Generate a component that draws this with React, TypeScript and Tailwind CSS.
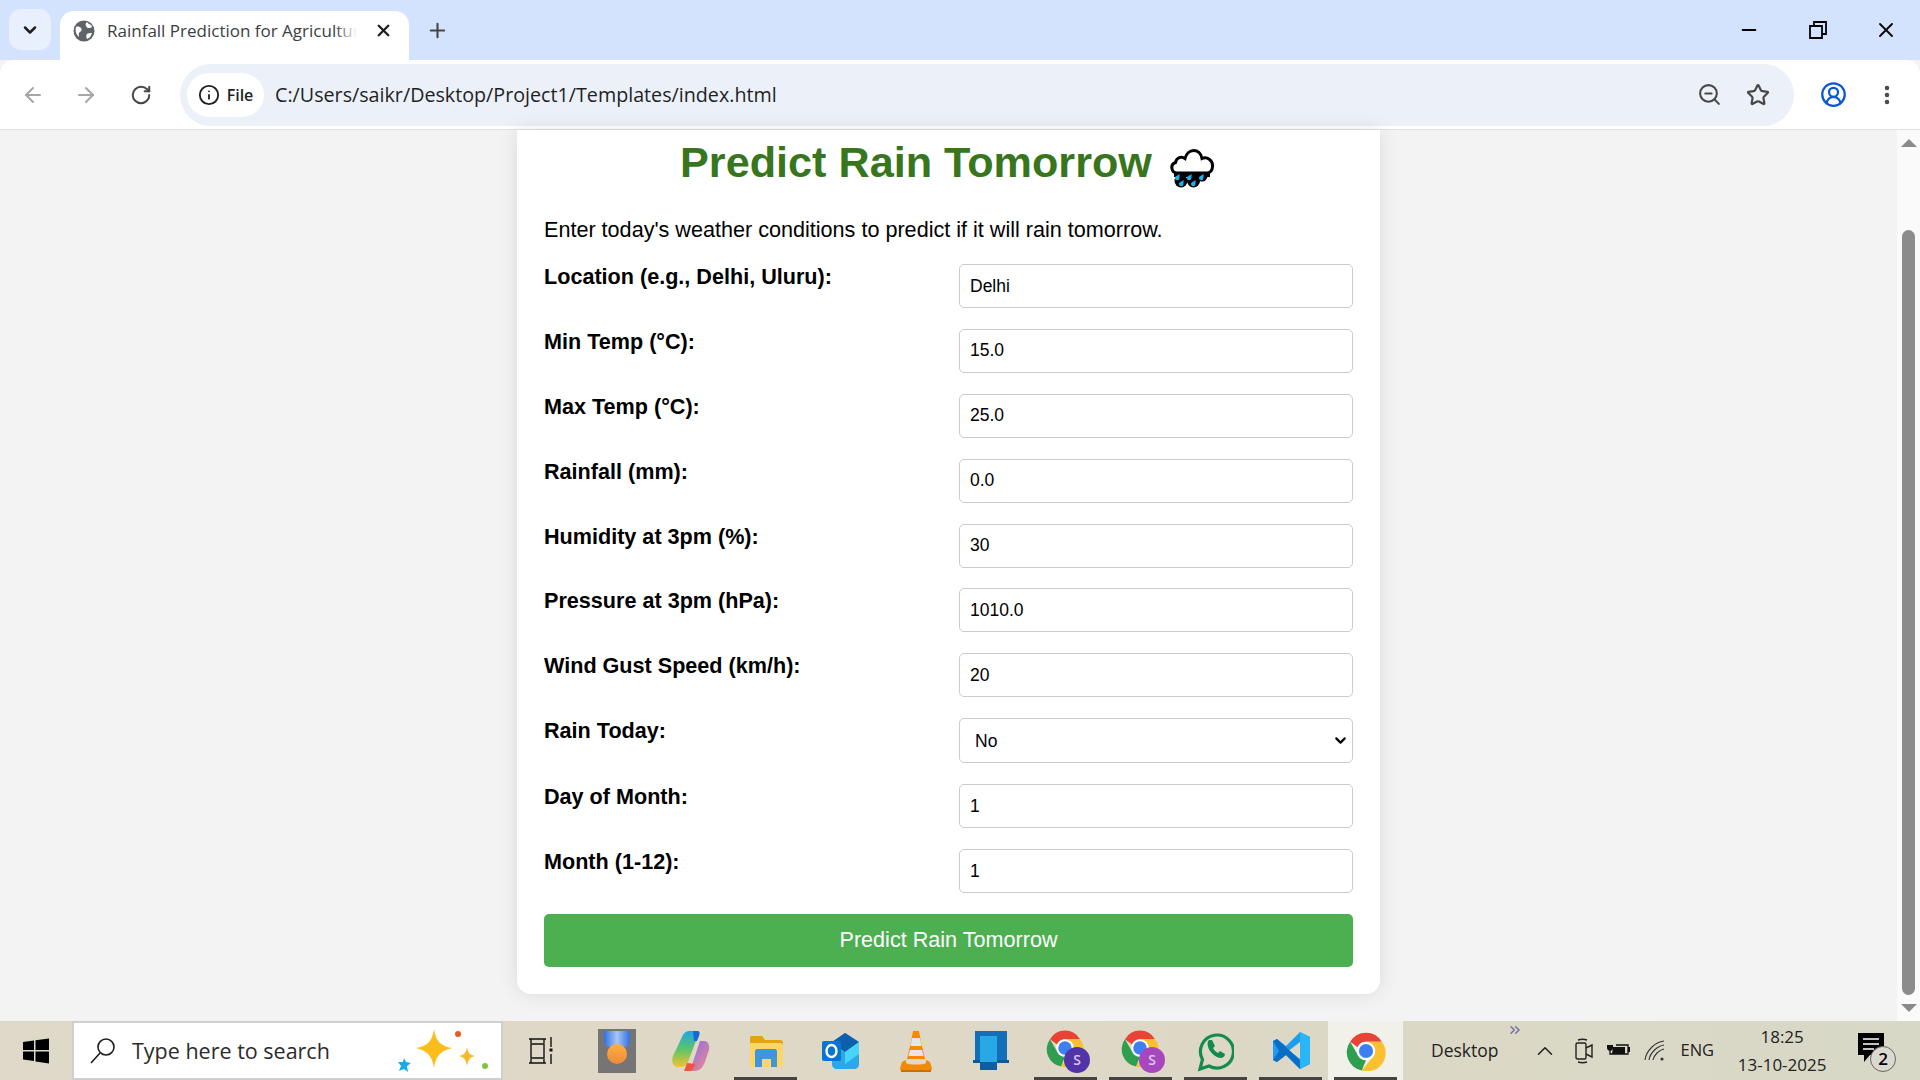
import {
  ArrowLeft,
  ArrowRight,
  ChevronDown,
  ChevronUp,
  ChevronsRight,
  CircleUserRound,
  EllipsisVertical,
  Info,
  Minus,
  Plus,
  RotateCw,
  Star,
  X,
  ZoomOut,
} from "lucide-react";

const fields = [
  { label: "Location (e.g., Delhi, Uluru):", value: "Delhi" },
  { label: "Min Temp (°C):", value: "15.0" },
  { label: "Max Temp (°C):", value: "25.0" },
  { label: "Rainfall (mm):", value: "0.0" },
  { label: "Humidity at 3pm (%):", value: "30" },
  { label: "Pressure at 3pm (hPa):", value: "1010.0" },
  { label: "Wind Gust Speed (km/h):", value: "20" },
];

function Field({ label, value }: { label: string; value: string }) {
  return (
    <div className="flex h-[44px] items-start">
      <label className="w-[415px] shrink-0 text-[21.6px] font-bold leading-[25px] text-black">{label}</label>
      <input
        readOnly
        value={value}
        className="h-[44px] w-[394px] rounded-[5px] border border-[#ccc] bg-white px-[10px] text-[17.5px] text-black outline-none"
      />
    </div>
  );
}

function RainCloud() {
  return (
    <svg width="45" height="41" viewBox="0 0 45 41" className="mb-[-3px] ml-[17px] inline-block">
      <circle cx="12" cy="34" r="6.500" fill="#000" />
      <circle cx="24.5" cy="34" r="6.500" fill="#000" />
      <circle cx="33" cy="29" r="5.500" fill="#000" />
      <path d="M5 25h36v5H5z" fill="#000" />
      <path
        d="M8 26C2.500 26 .5 17.500 6.500 15.500C7.500 10.500 12.500 9 16 11.500C18.500 1 31 .5 33 11.500C38 9 44 13.500 43.500 19.500C43.300 23.500 41 26 37.500 26Z"
        fill="#fff"
        stroke="#000"
        strokeWidth="3"
      />
      {[
        [8, 30],
        [20, 30],
        [32, 30],
        [12, 36],
        [24, 36],
      ].map(([x, y]) => (
        <path
          key={`${x}-${y}`}
          d={`M${x + 2.5} ${y - 3}C${x + 1} ${y - 1.500} ${x - 2} ${y - 1} ${x - 2} ${y + 1}a2.200 2.200 0 0 0 4.400 0C${x + 2.400} ${y} ${x + 2.800} ${y - 1.500} ${x + 2.500} ${y - 3}z`}
          fill="#14b4ee"
        />
      ))}
    </svg>
  );
}

function ChromeLogo({ size = 36 }: { size?: number }) {
  return (
    <svg width={size} height={size} viewBox="0 0 48 48">
      <path d="M24 2a22 22 0 0 1 19 11H24a11 11 0 0 0-10 6.500L5 13A22 22 0 0 1 24 2z" fill="#ea4335" />
      <path d="M5 13l9.500 16.500A11 11 0 0 0 24 35l-5 12.400A22 22 0 0 1 5 13z" fill="#2f9e4f" />
      <path d="M43 13a22 22 0 0 1-24 34.400L33.500 29.500A11 11 0 0 0 33.500 18.500L24 13z" fill="#fbc02d" />
      <circle cx="24" cy="24" r="11" fill="#fff" />
      <circle cx="24" cy="24" r="8.500" fill="#3d7ff0" />
    </svg>
  );
}

function ChromeProfile({ badge }: { badge: string }) {
  return (
    <div className="relative ml-[5px] h-[44px] w-[44px]">
      <ChromeLogo size={38} />
      <span
        className="absolute bottom-[0px] right-[0px] flex h-[26px] w-[26px] items-center justify-center rounded-full text-[14px] font-semibold text-[#d8c8f0]"
        style={{ backgroundColor: badge }}
      >
        S
      </span>
    </div>
  );
}

function Sparkles() {
  return (
    <svg width="92" height="50" viewBox="0 0 92 50">
      <path d="M36 3c2 13 7 17 18 19-11 3-16 7-18 20-2-13-7-17-18-20 11-2 16-6 18-19z" fill="#fbbd1c" />
      <path d="M69 21c1 6 3 8 8 9-5 1-7 4-8 10-1-6-3-9-8-10 5-1 7-3 8-9z" fill="#f8b92a" />
      <path d="M6 32l2 4 5 1-4 3 1 6-4-3-5 2 2-5-3-4 5 0z" fill="#1ba9ec" />
      <circle cx="60" cy="8" r="3" fill="#ea5a24" />
      <circle cx="87" cy="40" r="3" fill="#84c13e" />
    </svg>
  );
}

function AppSlot({ children, open, active }: { children: React.ReactNode; open?: boolean; active?: boolean }) {
  return (
    <div className={`relative flex h-full w-[75px] items-center justify-center ${active ? "bg-[#f1f1e9]" : ""}`}>
      {children}
      {open && <span className="absolute inset-x-[6px] bottom-0 h-[3px] bg-[#45433f]" />}
    </div>
  );
}

export default function App() {
  return (
    <div className="flex h-screen w-[1920px] flex-col overflow-hidden bg-[#f3f3f3] font-['Liberation_Sans',sans-serif]">
      {/* Tab strip */}
      <div className="flex h-[60px] shrink-0 items-end bg-[#d3e3fd] pl-[9px] font-['Open_Sans',sans-serif]">
        <div className="mb-[10px] flex h-[41px] w-[42px] items-center justify-center rounded-[12px] bg-[#e9f0fd]">
          <ChevronDown size={20} strokeWidth={3} className="text-[#1f1f1f]" />
        </div>
        <div className="relative ml-[9px] flex h-[49px] w-[349px] items-center rounded-t-[14px] bg-white pb-[10px] pl-[13px]">
          <svg width="22" height="22" viewBox="0 0 22 22" className="shrink-0">
            <circle cx="11" cy="11" r="10.500" fill="#5f6368" />
            <path d="M3 7c2-1 4 0 5 1s1 3-1 4-1 3-1 5C3 15 2 10 3 7zM14 2c1 2 3 2 5 4 0 2-2 2-3 2s-2 0-3-2 0-3 1-4zM14 14c1-1 3-1 5-1-1 3-2 5-5 6-1-2-1-4 0-5z" fill="#fff" />
          </svg>
          <div className="relative ml-[12px] w-[250px] overflow-hidden whitespace-nowrap text-[17px] leading-[24px] text-[#3c4043]">
            Rainfall Prediction for Agriculture
            <span className="absolute inset-y-0 right-0 w-[22px] bg-gradient-to-r from-transparent to-white" />
          </div>
          <X size={19} strokeWidth={3} className="ml-[17px] text-[#1f1f1f]" />
        </div>
        <Plus size={23} strokeWidth={2.2} className="mb-[18px] ml-[17px] text-[#474747]" />
        <div className="ml-auto flex h-full items-center text-black">
          <Minus size={22} strokeWidth={2} className="mr-[49px]" />
          <svg width="18" height="18" viewBox="0 0 18 18" fill="none" stroke="#000" strokeWidth="1.800" className="mr-[47px]">
            <path d="M1 5h12v12H1zM5 5V1h12v12h-4" />
          </svg>
          <X size={24} strokeWidth={1.8} className="mr-[22px]" />
        </div>
      </div>

      {/* Toolbar */}
      <div className="flex h-[70px] shrink-0 items-center rounded-t-[14px] border-b border-[#e0e0e0] bg-white pl-[21px] font-['Open_Sans',sans-serif]">
        <ArrowLeft size={24} className="text-[#a4a6a8]" />
        <ArrowRight size={24} className="ml-[29px] text-[#a4a6a8]" />
        <RotateCw size={22} strokeWidth={2.2} className="ml-[32px] text-[#474747]" />
        <div className="ml-[28px] flex h-[62px] w-[1614px] items-center rounded-full bg-[#ebf0f9] pl-[7px] pr-[24px]">
          <div className="flex h-[44px] w-[77px] items-center justify-center gap-[7px] rounded-full bg-white">
            <Info size={22} strokeWidth={2} className="text-[#1f1f1f]" />
            <span className="text-[16px] font-semibold text-[#1f1f1f]">File</span>
          </div>
          <span className="ml-[11px] text-[19.7px] text-[#1f1f1f]">C:/Users/saikr/Desktop/Project1/Templates/index.html</span>
          <ZoomOut size={25} strokeWidth={2} className="ml-auto text-[#474747]" />
          <Star size={24} strokeWidth={2.2} className="ml-[24px] text-[#474747]" />
        </div>
        <CircleUserRound size={27} strokeWidth={2} className="ml-[26px] text-[#0b57d0]" />
        <EllipsisVertical size={24} strokeWidth={2.5} className="ml-[28px] text-[#474747]" />
      </div>

      {/* Page */}
      <div className="flex min-h-0 flex-1">
        <div className="min-w-0 flex-1">
          <div className="mx-auto h-[864px] w-[863px] rounded-b-[14px] bg-white px-[27px] pt-[7px] shadow-[0_0_20px_rgba(0,0,0,0.1)]">
            <h1 className="h-[50px] pr-[3px] text-center text-[43.2px] font-bold leading-[50px] text-[#38761d]">
              Predict Rain Tomorrow
              <RainCloud />
            </h1>
            <p className="mt-[30px] text-[21.6px] leading-[26px] text-black">
              Enter today's weather conditions to predict if it will rain tomorrow.
            </p>
            <div className="mt-[21px] flex flex-col gap-[20.900px]">
              {fields.map((f) => (
                <Field key={f.label} {...f} />
              ))}
              <div className="flex h-[45px] items-start">
                <label className="w-[415px] shrink-0 text-[21.6px] font-bold leading-[25px] text-black">Rain Today:</label>
                <div className="relative">
                  <select className="h-[45px] w-[394px] appearance-none rounded-[5px] border border-[#ccc] bg-white pl-[15px] text-[17.5px] text-black outline-none">
                    <option>No</option>
                  </select>
                  <ChevronDown size={17} strokeWidth={3} className="pointer-events-none absolute right-[4px] top-[14px] text-black" />
                </div>
              </div>
              <Field label="Day of Month:" value="1" />
              <Field label="Month (1-12):" value="1" />
              <button className="h-[53px] w-full rounded-[5px] bg-[#4caf50] text-[21.6px] text-white">
                Predict Rain Tomorrow
              </button>
            </div>
          </div>
        </div>

        {/* Scrollbar */}
        <div className="flex w-[23px] shrink-0 flex-col items-center bg-[#fafafa] pt-[9px]">
          <span className="h-0 w-0 border-x-[8px] border-b-[8px] border-x-transparent border-b-[#8a8a8a]" />
          <span className="mt-[83px] h-[765px] w-[13px] rounded-full bg-[#8c8c8c]" />
          <span className="mt-[9px] h-0 w-0 border-x-[8px] border-t-[8px] border-x-transparent border-t-[#8a8a8a]" />
        </div>
      </div>

      {/* Taskbar */}
      <div className="flex h-[59px] shrink-0 items-stretch bg-gradient-to-r from-[#dfd9ca] via-[#dfd8c6] to-[#d8d8c6] font-['Open_Sans',sans-serif]">
        <div className="flex w-[72px] items-center justify-center">
          <svg width="26" height="26" viewBox="0 0 26 26" fill="#000">
            <path d="M0 4l11-1.500V12H0zM12.500 2.300L26 .5V12H12.500zM0 13.500h11V23L0 21.500zM12.500 13.500H26V25.500L12.500 23.500z" />
          </svg>
        </div>
        <div className="flex w-[431px] items-center border-2 border-[#cfcfcf] bg-white pl-[16px]">
          <svg width="26" height="30" viewBox="0 0 26 30" fill="none" stroke="#1f1f1f" strokeWidth="1.600">
            <circle cx="16" cy="11" r="8" />
            <path d="M10 17L1 27" />
          </svg>
          <span className="ml-[16px] pt-[1px] text-[21.500px] text-[#2b2b2b]">Type here to search</span>
          <span className="ml-auto mr-[11px]">
            <Sparkles />
          </span>
        </div>
        <AppSlot>
          <svg width="26" height="30" viewBox="0 0 26 30" fill="none" stroke="#111" strokeWidth="1.400">
            <path d="M1 3h17M1 27h17M3 3v4M16 3v4M3 23v4M16 23v4M3 8h13v14H3zM23 1v10M23 18v10" />
            <rect x="21.500" y="12.500" width="3" height="3" fill="#111" stroke="none" />
          </svg>
        </AppSlot>
        <AppSlot>
          <div className="ml-[2px] flex h-[44px] w-[38px] flex-col items-center bg-[#757575] pt-[2px]">
            <span className="h-[16px] w-[26px] rounded-b-[6px] bg-gradient-to-r from-[#2f6fe0] via-[#a8c4f5] to-[#2f6fe0]" />
            <span className="-mt-[3px] h-[20px] w-[20px] rounded-full bg-gradient-to-b from-[#fbb040] to-[#ef8a3c]" />
          </div>
        </AppSlot>
        <AppSlot>
          <svg width="38" height="42" viewBox="0 0 38 42">
            <defs>
              <linearGradient id="cp1" x1="0" y1="0" x2="0" y2="1">
                <stop offset="0" stopColor="#1fa5e8" />
                <stop offset="0.5" stopColor="#5cc46a" />
                <stop offset="1" stopColor="#f2c230" />
              </linearGradient>
              <linearGradient id="cp2" x1="0" y1="0" x2="1" y2="1">
                <stop offset="0" stopColor="#7d6cf0" />
                <stop offset="1" stopColor="#f48a8a" />
              </linearGradient>
            </defs>
            <path d="M17 1h6c3 0 3 3 2 7l-9 24c-1 3-4 5-7 5H6C1 37-1 31 1 26L10 7c1-3 4-6 7-6z" fill="url(#cp1)" />
            <path d="M28 11h4c4 0 6 4 5 9l-4 12c-2 5-5 9-10 9h-9c3-1 5-3 6-6z" fill="url(#cp2)" />
            <path d="M21 1h4c3 0 3 2 2 5l-2 5h-3z" fill="#1668d8" />
            <path d="M12 41h6c2 0 4-3 5-7l-8-1z" fill="#f0553a" />
          </svg>
        </AppSlot>
        <AppSlot open>
          <svg width="34" height="32" viewBox="0 0 34 32">
            <path d="M1 3c0-1.500 1-2 2-2h10l3 4h15c2 0 3 1 3 3v6H1z" fill="#e2a40f" />
            <path d="M1 8h31c1 0 2 1 2 2v19c0 1.500-1 3-3 3H3c-1 0-2-1-2-3z" fill="#fcd667" />
            <path d="M8 14h18c1 0 2 1 2 2v16h-6v-8h-9v8H6V16c0-1 1-2 2-2z" fill="#3f97d8" />
          </svg>
          <span className="absolute bottom-0 right-[6px] h-[3px] w-[12px] bg-[#8f8d88]" />
        </AppSlot>
        <AppSlot>
          <svg width="38" height="38" viewBox="0 0 38 38">
            <path d="M10 10l13-9 14 9v22c0 3-2 5-5 5H15c-3 0-5-2-5-5z" fill="#2aa8ea" />
            <path d="M10 10l13-9 14 9-14 10z" fill="#0f5fae" />
            <path d="M23 20l14-10v12l-14 10z" fill="#48d4fb" />
            <rect x="0" y="9" width="19" height="20" rx="2" fill="#0a74d1" />
            <ellipse cx="9.500" cy="19" rx="5" ry="6" fill="none" stroke="#fff" strokeWidth="2.400" />
          </svg>
        </AppSlot>
        <AppSlot>
          <svg width="32" height="42" viewBox="0 0 32 42">
            <path d="M13 1h6l2 11 4 17H7l4-17z" fill="#f28a07" />
            <path d="M12 8h8l1.500 8h-11zM10 20h12l1.500 6h-15z" fill="#e6e6e6" />
            <path d="M2 32c-1 3-2 6-2 7 0 1 1 2 3 2h26c2 0 3-1 3-2s-1-4-2-7l-4-2v3c-2 2-18 2-20 0v-3z" fill="#ef8a0b" />
            <path d="M1 40h30v2H1z" fill="#c96f08" />
          </svg>
        </AppSlot>
        <AppSlot>
          <svg width="36" height="40" viewBox="0 0 36 40">
            <path d="M2 0h32v30H2z" fill="#1170b8" />
            <path d="M0 29h36v3H0z" fill="#0b5a96" />
            <path d="M7 5h17v26H7z" fill="#29a8e6" />
            <path d="M7 32h17v7H7z" fill="#0f5d9f" />
          </svg>
        </AppSlot>
        <AppSlot open>
          <ChromeProfile badge="#5233a8" />
        </AppSlot>
        <AppSlot open>
          <ChromeProfile badge="#a847bd" />
        </AppSlot>
        <AppSlot open>
          <svg width="37" height="44" viewBox="0 0 37 44" fill="none">
            <path d="M3 40l2.500-9.500A16.500 16.500 0 1 1 12 37z" stroke="#128c4d" strokeWidth="3.200" />
            <path d="M12 11c-2 2-2 6 1 11 3 4 7 7 11 7 2 0 4-2 4-4l-5-3-2 2c-2-1-4-3-5-5l2-2-3-6z" fill="#128c4d" />
          </svg>
        </AppSlot>
        <AppSlot open>
          <svg width="37" height="37" viewBox="0 0 37 37" className="ml-[2px]">
            <path d="M27 0l10 5v27l-10 5-14-14-9 7-4-2V9l4-2 9 7z" fill="#1f9cf0" />
            <path d="M27 0v37l10-5V5z" fill="#29b6f6" />
            <path d="M27 10L16 18.500 27 27z" fill="#dcd9c9" />
            <path d="M0 9l4-2 23 21-0 9-14-14-9 7-4-2 6-9z" fill="#0a6fc2" />
          </svg>
        </AppSlot>
        <AppSlot open active>
          <ChromeLogo size={40} />
        </AppSlot>

        {/* System tray */}
        <div className="relative flex h-full flex-1 items-center text-[#222]">
          <span className="ml-[28px] text-[17.500px]">Desktop</span>
          <ChevronsRight size={16} strokeWidth={2.2} className="absolute left-[104px] top-[1px] text-[#7470a8]" />
          <ChevronUp size={26} strokeWidth={1.400} className="ml-[33px]" />
          <svg width="18" height="26" viewBox="0 0 18 26" fill="none" stroke="#222" strokeWidth="1.400" className="ml-[17px]">
            <rect x="1" y="5" width="10" height="16" rx="1.500" />
            <path d="M11 10l6-3v12l-6-3M3 2c3-1 6-1 9 0M3 24c3 1 6 1 9 0" />
          </svg>
          <svg width="24" height="20" viewBox="0 0 24 20" className="ml-[13px]">
            <path d="M2 0v4M6 0v4M1 4h6v3c0 2-2 3-3 3S1 9 1 7z" fill="#111" />
            <path d="M4 10v3h18v-9H10" fill="none" stroke="#111" strokeWidth="1.300" />
            <path d="M7 6h12v7H6z" fill="#111" />
            <path d="M22 6h2v5h-2z" fill="#111" />
          </svg>
          <svg width="22" height="22" viewBox="0 0 22 22" fill="none" stroke="#333" strokeWidth="1.100" className="ml-[14px]">
            <path d="M1 20C2 11 11 2 20 1M5 20C6 13 13 6 20 5M9 20c1-5 6-10 11-11" />
            <circle cx="18" cy="19" r="1.600" fill="#333" stroke="none" />
          </svg>
          <span className="ml-[15px] text-[16.500px]">ENG</span>
          <div className="ml-[22px] flex w-[92px] flex-col items-center text-[17px] leading-[28px]">
            <span>18:25</span>
            <span>13-10-2025</span>
          </div>
          <div className="relative ml-[30px] h-[36px] w-[26px]">
            <svg width="26" height="30" viewBox="0 0 26 30">
              <path d="M0 0h26v22H12l-6 7v-7H0z" fill="#000" />
              <path d="M5 6h16M5 11h16M5 16h11" stroke="#fff" strokeWidth="1.500" />
            </svg>
            <span className="absolute -bottom-[3px] -right-[12px] flex h-[26px] w-[26px] items-center justify-center rounded-full border border-[#666] bg-[#d9d9d2] text-[17px] font-semibold text-black">
              2
            </span>
          </div>
        </div>
      </div>
    </div>
  );
}
